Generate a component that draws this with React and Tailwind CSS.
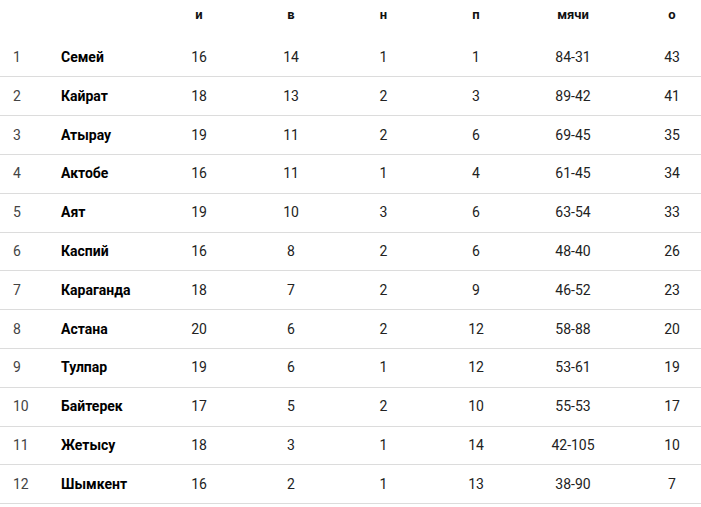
import React from 'react'

const rows = [
  ['1', 'Семей', '16', '14', '1', '1', '84-31', '43'],
  ['2', 'Кайрат', '18', '13', '2', '3', '89-42', '41'],
  ['3', 'Атырау', '19', '11', '2', '6', '69-45', '35'],
  ['4', 'Актобе', '16', '11', '1', '4', '61-45', '34'],
  ['5', 'Аят', '19', '10', '3', '6', '63-54', '33'],
  ['6', 'Каспий', '16', '8', '2', '6', '48-40', '26'],
  ['7', 'Караганда', '18', '7', '2', '9', '46-52', '23'],
  ['8', 'Астана', '20', '6', '2', '12', '58-88', '20'],
  ['9', 'Тулпар', '19', '6', '1', '12', '53-61', '19'],
  ['10', 'Байтерек', '17', '5', '2', '10', '55-53', '17'],
  ['11', 'Жетысу', '18', '3', '1', '14', '42-105', '10'],
  ['12', 'Шымкент', '16', '2', '1', '13', '38-90', '7'],
]

const cols = 'grid grid-cols-[48px_105px_92px_92px_93px_92px_102px_1fr]'

const App = () => {
  return (
    <div className="w-[701px] h-[507px] bg-white overflow-hidden font-['Roboto',sans-serif]">
      {/* Header */}
      <div className={`${cols} h-[38.5px] pt-[7px] text-[13px] leading-[16px] font-bold text-[#111]`}>
        <div />
        <div />
        <div className="text-center">и</div>
        <div className="text-center">в</div>
        <div className="text-center">н</div>
        <div className="text-center">п</div>
        <div className="text-center">мячи</div>
        <div className="text-center pl-[19px]">о</div>
      </div>

      {/* Rows */}
      {rows.map((r) => (
        <div
          key={r[0]}
          className={`${cols} h-[38.82px] items-center border-b border-[#dcdcdc] text-[14px] text-[#222]`}
        >
          <div className="pl-[13px] text-[#444]">{r[0]}</div>
          <div className="pl-[13px] font-bold text-black">{r[1]}</div>
          <div className="text-center">{r[2]}</div>
          <div className="text-center">{r[3]}</div>
          <div className="text-center">{r[4]}</div>
          <div className="text-center">{r[5]}</div>
          <div className="text-center">{r[6]}</div>
          <div className="text-center pl-[19px]">{r[7]}</div>
        </div>
      ))}
    </div>
  )
}

export default App
